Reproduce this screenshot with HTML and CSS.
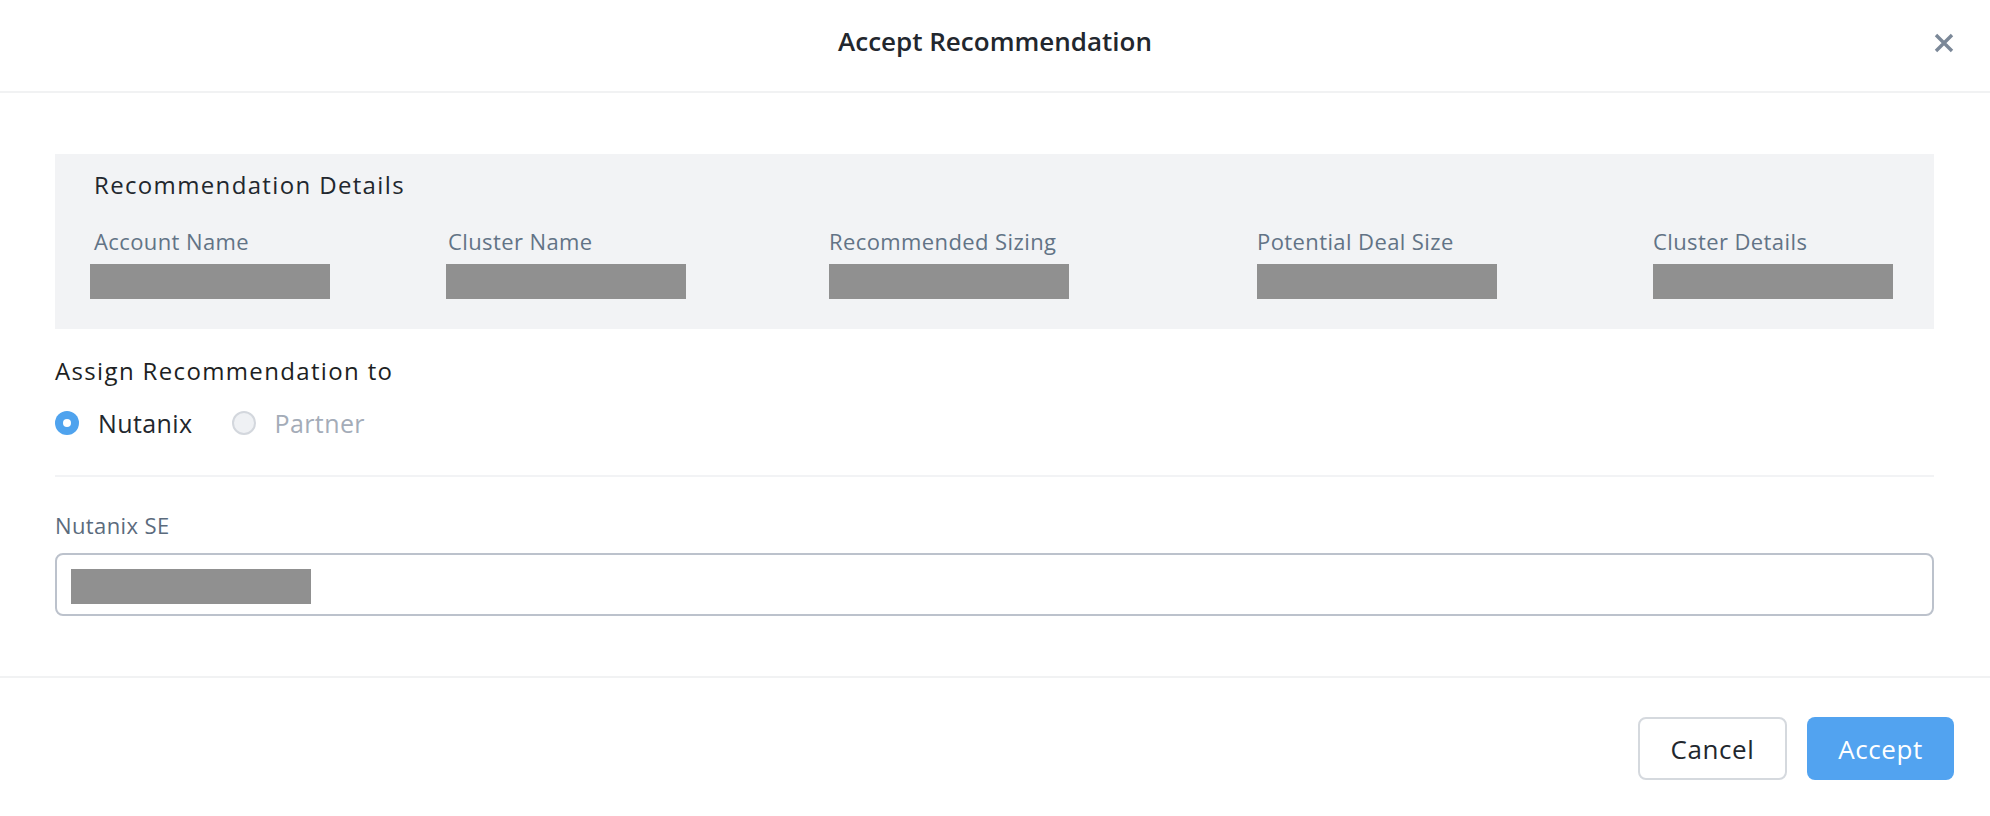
FILE: index.html
```html
<!DOCTYPE html>
<html lang="en">
<head>
<meta charset="utf-8">
<title>Accept Recommendation</title>
<link rel="stylesheet" href="styles.css">
</head>
<body>
<div class="modal">
  <header class="modal-header">
    <div></div>
    <h1 class="modal-title">Accept Recommendation</h1>
    <button class="close-btn" aria-label="Close">
      <svg width="20" height="20" viewBox="0 0 20 20"><path d="M2 2 L18 18 M18 2 L2 18" stroke="#7b8898" stroke-width="3.4" fill="none"/></svg>
    </button>
  </header>

  <main class="modal-body">
    <section class="details">
      <h2 class="details-title">Recommendation Details</h2>
      <div class="details-grid">
        <div class="detail">
          <div class="detail-label">Account Name</div>
          <div class="redact redact-shift4"></div>
        </div>
        <div class="detail">
          <div class="detail-label">Cluster Name</div>
          <div class="redact redact-shift2"></div>
        </div>
        <div class="detail">
          <div class="detail-label">Recommended Sizing</div>
          <div class="redact"></div>
        </div>
        <div class="detail">
          <div class="detail-label">Potential Deal Size</div>
          <div class="redact"></div>
        </div>
        <div class="detail">
          <div class="detail-label">Cluster Details</div>
          <div class="redact"></div>
        </div>
      </div>
    </section>

    <h3 class="assign-title">Assign Recommendation to</h3>
    <div class="radio-row">
      <label class="radio checked"><span class="radio-dot"></span><span class="radio-text">Nutanix</span></label>
      <label class="radio disabled"><span class="radio-dot"></span><span class="radio-text">Partner</span></label>
    </div>

    <hr class="divider">

    <div class="field-label">Nutanix SE</div>
    <div class="input-box"><div class="redact"></div></div>
  </main>

  <footer class="modal-footer">
    <button class="btn btn-secondary">Cancel</button>
    <button class="btn btn-primary">Accept</button>
  </footer>
</div>
</body>
</html>
```

FILE: styles.css
```css
* { box-sizing: border-box; }

html, body {
  margin: 0;
  padding: 0;
  background: #ffffff;
}

body {
  font-family: "Open Sans", "Liberation Sans", sans-serif;
  color: #22272e;
}

.modal {
  width: 1990px;
}

.modal-header {
  height: 93px;
  display: grid;
  grid-template-columns: 1fr auto 1fr;
  align-items: center;
  border-bottom: 2px solid #f1f2f3;
  padding-bottom: 6px;
}

.modal-title {
  margin: -4px 0 0 0;
  font-size: 26px;
  font-weight: 600;
  line-height: 34px;
  color: #22272e;
}

.close-btn {
  justify-self: end;
  margin-right: 36px;
  width: 20px;
  height: 20px;
  padding: 0;
  border: 0;
  background: transparent;
  display: flex;
}

.modal-body {
  padding: 61px 56px 60px 55px;
}

.details {
  background: #f2f3f5;
  padding: 15px 40px 30px 39px;
}

.details-title {
  margin: 0;
  font-size: 24px;
  font-weight: 400;
  line-height: 32px;
  letter-spacing: 1.35px;
  color: #22272e;
}

.details-grid {
  margin-top: 26px;
  display: grid;
  grid-template-columns: 354px 381px 428px 396px 1fr;
}

.detail-label {
  font-size: 22px;
  line-height: 28px;
  letter-spacing: 0.4px;
  color: #627386;
}

.redact {
  width: 240px;
  height: 35px;
  margin-top: 9px;
  background: #909090;
}

.redact-shift4 { margin-left: -4px; }
.redact-shift2 { margin-left: -2px; }

.assign-title {
  margin: 26px 0 0 0;
  font-size: 24px;
  font-weight: 400;
  line-height: 32px;
  letter-spacing: 1.35px;
  color: #1d1f23;
}

.radio-row {
  margin-top: 20px;
  display: flex;
  gap: 39px;
  height: 32px;
}

.radio {
  display: flex;
  align-items: center;
  gap: 19px;
  font-size: 25px;
  line-height: 32px;
  letter-spacing: 0.4px;
}

.radio-dot {
  width: 24px;
  height: 24px;
  border-radius: 50%;
  flex: none;
}

.radio.checked .radio-dot {
  background: #4fa3ee;
  position: relative;
}

.radio.checked .radio-dot::after {
  content: "";
  position: absolute;
  left: 8px;
  top: 8px;
  width: 8px;
  height: 8px;
  border-radius: 50%;
  background: #ffffff;
}

.radio.checked .radio-text { color: #22272e; }

.radio.disabled .radio-dot {
  background: #eff1f4;
  border: 2px solid #d3d7dd;
}

.radio.disabled .radio-text { color: #a4acb8; }

.divider {
  margin: 36px 0 0 0;
  border: 0;
  height: 2px;
  background: #f2f3f5;
}

.field-label {
  margin-top: 34px;
  font-size: 22px;
  line-height: 28px;
  letter-spacing: 0.4px;
  color: #5b6b7d;
}

.input-box {
  margin-top: 14px;
  height: 63px;
  border: 2px solid #bcc2cc;
  border-radius: 8px;
  padding: 14px 14px;
}

.input-box .redact {
  margin-top: 0;
}

.modal-footer {
  border-top: 2px solid #f1f2f3;
  padding: 39px 36px 0 0;
  display: flex;
  justify-content: flex-end;
  gap: 20px;
}

.btn {
  height: 63px;
  border-radius: 8px;
  font-family: "Open Sans", "Liberation Sans", sans-serif;
  font-size: 26px;
  line-height: 1;
  letter-spacing: 0.6px;
  padding: 0;
  cursor: pointer;
}

.btn-secondary {
  width: 149px;
  background: #ffffff;
  border: 2px solid #d5d9de;
  color: #22272e;
}

.btn-primary {
  width: 147px;
  background: #52a3f0;
  border: 0;
  color: #ffffff;
}
```
